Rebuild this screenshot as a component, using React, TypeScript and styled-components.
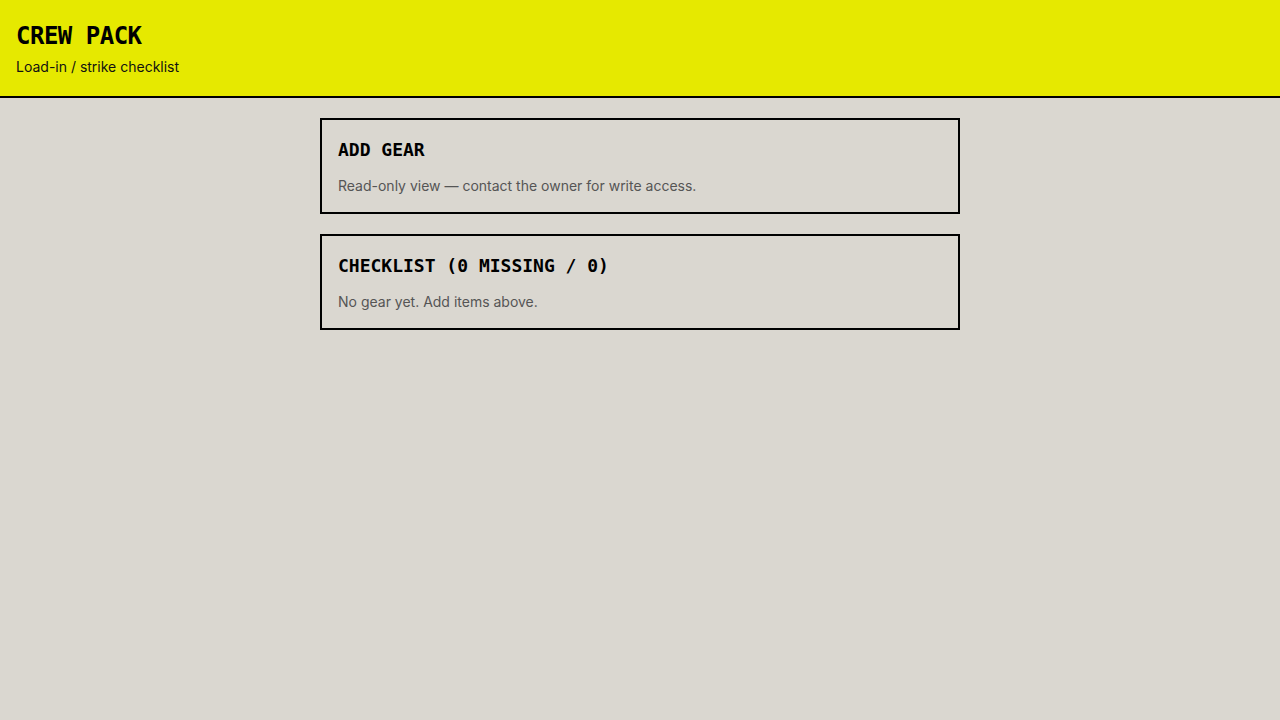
import styled, { createGlobalStyle } from 'styled-components';

const GlobalStyle = createGlobalStyle`
  * {
    box-sizing: border-box;
  }

  body {
    margin: 0;
    background: #dad7d0;
    font-family: 'Inter', 'Liberation Sans', sans-serif;
    color: #111;
  }
`;

const Header = styled.header`
  background: #e6e900;
  border-bottom: 2px solid #000;
  padding: 22px 16px 19px;
`;

const Title = styled.h1`
  margin: 0;
  font-family: 'DejaVu Sans Mono', 'Liberation Mono', monospace;
  font-size: 24px;
  line-height: 29px;
  font-weight: 700;
  letter-spacing: -0.5px;
  color: #000;
`;

const Subtitle = styled.p`
  margin: 6px 0 0;
  font-size: 14px;
  line-height: 20px;
  color: #111;
`;

const Main = styled.main`
  width: 640px;
  margin: 20px auto 0;
  display: flex;
  flex-direction: column;
  gap: 20px;
`;

const Card = styled.section`
  border: 2px solid #000;
  padding: 16px;
`;

const CardTitle = styled.h2`
  margin: 0 0 13px;
  font-family: 'DejaVu Sans Mono', 'Liberation Mono', monospace;
  font-size: 18px;
  line-height: 27px;
  font-weight: 700;
  color: #000;
`;

const Note = styled.p`
  margin: 0;
  font-size: 14px;
  line-height: 20px;
  color: #555;
`;

const App = () => {
  return (
    <>
      <GlobalStyle />
      <Header>
        <Title>CREW PACK</Title>
        <Subtitle>Load-in / strike checklist</Subtitle>
      </Header>
      <Main>
        <Card>
          <CardTitle>ADD GEAR</CardTitle>
          <Note>Read-only view — contact the owner for write access.</Note>
        </Card>
        <Card>
          <CardTitle>CHECKLIST (0 MISSING / 0)</CardTitle>
          <Note>No gear yet. Add items above.</Note>
        </Card>
      </Main>
    </>
  );
};

export default App;
